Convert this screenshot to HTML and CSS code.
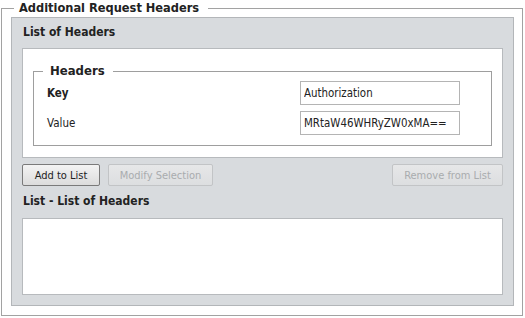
FILE: index.html
```html
<!DOCTYPE html>
<html lang="en">
<head>
    <meta charset="UTF-8">
    <title>Additional Request Headers</title>
    <link rel="stylesheet" href="styles.css">
</head>
<body>

<fieldset class="group">
    <legend>Additional Request Headers</legend>

    <div class="panel">
        <h2>List of Headers</h2>

        <div class="box">
            <fieldset class="inner">
                <legend>Headers</legend>
                <div class="row">
                    <label class="key" for="key">Key</label>
                    <input type="text" id="key" value="Authorization">
                </div>
                <div class="row">
                    <label for="value">Value</label>
                    <input type="text" id="value" value="MRtaW46WHRyZW0xMA==">
                </div>
            </fieldset>
        </div>

        <div class="actions">
            <button class="btn add">Add to List</button>
            <button class="btn modify" disabled>Modify Selection</button>
            <span class="spacer"></span>
            <button class="btn remove" disabled>Remove from List</button>
        </div>

        <h2>List - List of Headers</h2>
        <div class="list"></div>
    </div>
</fieldset>

</body>
</html>
```

FILE: styles.css
```css
body {
    margin: 0;
    background: #fff;
    font-family: "DejaVu Sans Condensed", "DejaVu Sans", sans-serif;
    color: #222;
    width: 525px;
    height: 318px;
}
.group {
    margin: 0 2px 0 1px;
    padding: 1px 8px 9px 9px;
    border: 1px solid #a2a2a2;
    height: 316px;
    box-sizing: border-box;
}
.group > legend {
    font-size: 12.7px;
    font-weight: bold;
    line-height: 16px;
    padding: 0 9px 0 5px;
    margin-left: 3px;
}
.panel {
    background: #d8dbde;
    border: 1px solid #b3b6b9;
    padding: 6px 10px 10px 10px;
    height: 289px;
    box-sizing: border-box;
}
h2 {
    font-size: 12px;
    font-weight: bold;
    line-height: 16px;
    margin: 0 0 0 1px;
}
.box {
    background: #fff;
    border: 1px solid #b7babd;
    margin-top: 8px;
    padding: 0 10px 10px 10px;
    height: 110px;
    box-sizing: border-box;
}
.inner {
    margin: 14px 0 0 0;
    padding: 2px 31px 10px 13px;
    border: 1px solid #9e9e9e;
}
.inner > legend {
    font-size: 13px;
    font-weight: bold;
    line-height: 16px;
    padding: 0 8px 0 7px;
    margin-left: -4px;
}
.row {
    display: flex;
    justify-content: space-between;
    align-items: center;
    margin-bottom: 6px;
}
.row:last-child {
    margin-bottom: 0;
}
label {
    font-size: 11.5px;
}
.key {
    font-weight: bold;
}
input {
    width: 160px;
    height: 24px;
    box-sizing: border-box;
    border: 1px solid #b4b4b4;
    padding: 0 3px;
    font-family: "DejaVu Sans Condensed", "DejaVu Sans", sans-serif;
    font-size: 11.4px;
    color: #222;
    outline: none;
}
.actions {
    display: flex;
    gap: 8px;
    margin: 6px 0 7px 0;
}
.spacer {
    flex: 1;
}
.btn {
    height: 22px;
    padding: 0;
    font-family: "DejaVu Sans Condensed", "DejaVu Sans", sans-serif;
    font-size: 11px;
    color: #222;
    background: linear-gradient(#f3f3f3, #dcdcdc);
    border: 1px solid #7a7a7a;
    border-radius: 2px;
}
.add {
    width: 78px;
}
.modify {
    width: 105px;
}
.remove {
    width: 111px;
}
.btn:disabled {
    color: #a9acae;
    border-color: #c2c4c6;
    background: linear-gradient(#e6e7e8, #dcdee0);
}
.list {
    background: #fff;
    border: 1px solid #b7babd;
    margin-top: 9px;
    height: 75px;
}
```
